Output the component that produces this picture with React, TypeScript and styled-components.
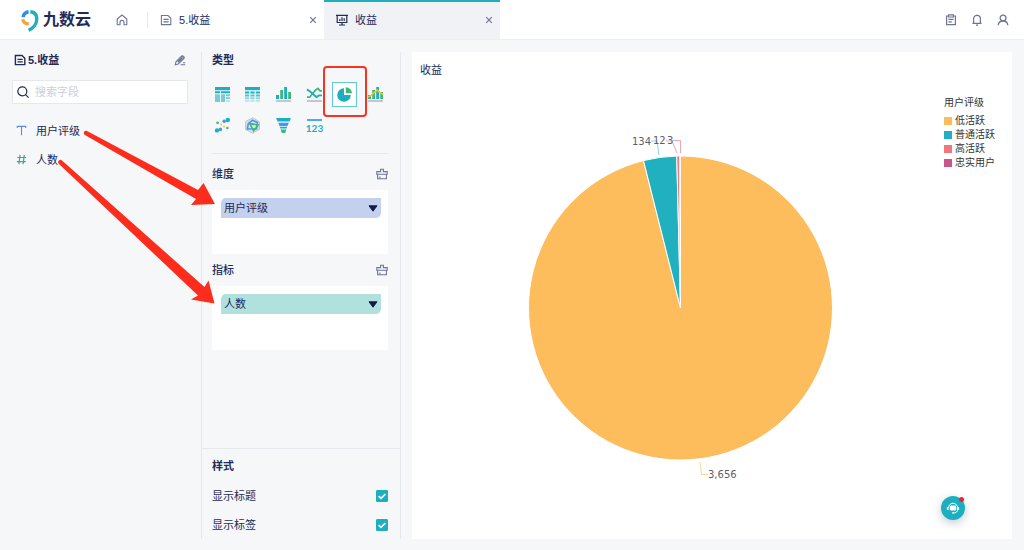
import React from "react";
import styled, { createGlobalStyle } from "styled-components";

const TEAL = "#1dafbf";
const GREEN = "#3cb878";
const BLUE = "#3a9bf5";
const INK = "#232a58";
const MUTED = "#6f7594";
const LINE = "#e6e8ed";

const GlobalStyle = createGlobalStyle`
  *, *::before, *::after { box-sizing: border-box; }
  body {
    margin: 0;
    background: #f6f7f9;
    color: ${INK};
    font: 11px/16px "Liberation Sans", "Noto Sans CJK SC", sans-serif;
  }
  button, input, select { font: inherit; color: inherit; }
  button { border: 0; padding: 0; background: none; cursor: pointer; }
  svg { display: block; }
`;

const Page = styled.div`
  display: flex;
  flex-direction: column;
  min-height: 100vh;
`;

const Header = styled.header`
  display: flex;
  align-items: stretch;
  height: 40px;
  background: #fff;
  border-bottom: 1px solid #eceef1;
`;

const Logo = styled.a`
  display: flex;
  align-items: center;
  gap: 3px;
  margin-left: 20px;
  color: ${INK};
  text-decoration: none;
  font-size: 16px;
  font-weight: 700;
`;

const HomeLink = styled.a`
  display: flex;
  align-items: center;
  margin: 0 19px 0 25px;
  color: ${MUTED};
`;

const Tabs = styled.nav`
  display: flex;
  flex: 1;
  align-items: center;
  &::before {
    content: "";
    width: 1px;
    height: 16px;
    background: ${LINE};
  }
`;

const Tab = styled.div<{ $active?: boolean }>`
  display: flex;
  align-items: center;
  width: 176px;
  height: 100%;
  padding: 0 5px 0 12px;
  border-top: 2px solid ${(p) => (p.$active ? TEAL : "transparent")};
  border-bottom: 2px solid transparent;
  background: ${(p) => (p.$active ? "#f0f2f6" : "transparent")};
`;

const TabLink = styled.a`
  display: flex;
  flex: 1;
  align-items: center;
  gap: 7px;
  color: ${INK};
  text-decoration: none;
`;

const IconButton = styled.button`
  display: flex;
  align-items: center;
  justify-content: center;
  min-width: 12px;
  height: 12px;
  color: ${MUTED};
`;

const HeaderTools = styled.div`
  display: flex;
  align-items: center;
  gap: 14px;
  margin-right: 15px;
`;

const Workspace = styled.main`
  position: relative;
  display: flex;
  flex: 1;
  padding: 12px 12px 11px 0;
`;

const FieldPanel = styled.aside`
  flex: 0 0 202px;
  padding: 0 13px 0 12px;
  border-right: 1px solid ${LINE};
`;

const PanelHeading = styled.div<{ $inset?: boolean }>`
  display: flex;
  align-items: center;
  justify-content: space-between;
  padding: ${(p) => (p.$inset ? "0 2px" : "0")};
`;

const Heading = styled.h2<{ $weight?: number }>`
  display: flex;
  align-items: center;
  gap: 2px;
  margin: 0;
  font-size: 11px;
  font-weight: ${(p) => p.$weight ?? 700};
`;

const SearchBox = styled.label`
  display: flex;
  align-items: center;
  gap: 6px;
  height: 24px;
  margin: 12px 0;
  padding: 0 4px;
  background: #fff;
  border: 1px solid #e6e8ee;
`;

const SearchInput = styled.input`
  flex: 1;
  min-width: 0;
  padding: 0;
  border: 0;
  outline: 0;
  background: none;
  &::placeholder { color: #cdcfda; opacity: 1; }
`;

const FieldList = styled.ul`
  margin: 0;
  padding: 0;
  list-style: none;
`;

const FieldItem = styled.li`
  display: flex;
  align-items: center;
  gap: 9px;
  height: 29px;
  padding-left: 4px;
`;

const ConfigPanel = styled.section`
  display: flex;
  flex: 0 0 199px;
  flex-direction: column;
  border-right: 1px solid ${LINE};
`;

const ConfigBody = styled.div`
  flex: 1;
  padding: 0 12px 0 10px;
`;

const TypeGrid = styled.div`
  display: grid;
  grid-template-columns: repeat(6, 1fr);
  grid-auto-rows: 31px;
  margin: 11px -3px 12px -5px;
`;

const TypeButton = styled.button<{ $selected?: boolean }>`
  position: relative;
  display: flex;
  align-items: center;
  justify-content: center;
  justify-self: center;
  align-self: center;
  width: 25px;
  height: 25px;
  border: 1px solid ${(p) => (p.$selected ? "#62c7d1" : "transparent")};
  background: ${(p) => (p.$selected ? "#fff" : "none")};
`;

const Highlight = styled.span`
  position: absolute;
  z-index: 2;
  inset: -17px -11px -11px -10px;
  border: 2px solid #fa3222;
  border-radius: 4px;
`;

const DropSection = styled.section`
  padding-top: 12px;
  & + & { padding-top: 8px; }
  &:first-of-type { border-top: 1px solid ${LINE}; }
`;

const DropZone = styled.div`
  height: 64px;
  margin-top: 8px;
  padding: 8px 7px 0 9px;
  background: #fff;
`;

const Chip = styled.div<{ $color: string }>`
  display: grid;
  align-items: center;
  height: 20px;
  border-radius: 5px 0 5px 0;
  background: ${(p) => p.$color};
  & > * { grid-area: 1 / 1; }
  & > svg { justify-self: end; margin-right: 3px; pointer-events: none; }
`;

const ChipSelect = styled.select`
  width: 100%;
  height: 20px;
  padding: 0 16px 0 3px;
  border: 0;
  outline: 0;
  appearance: none;
  background: none;
`;

const StylePanel = styled.section`
  padding: 9px 12px 0 10px;
  border-top: 1px solid ${LINE};
`;

const CheckRow = styled.label`
  display: flex;
  align-items: center;
  justify-content: space-between;
  height: 29px;
`;

const CheckList = styled.div`
  padding: 7px 0 0;
`;

const CheckControl = styled.span`
  display: grid;
  place-items: center;
  & > * { grid-area: 1 / 1; }
  & > svg { pointer-events: none; }
`;

const CheckInput = styled.input`
  width: 12px;
  height: 12px;
  margin: 0;
  appearance: none;
  border: 1px solid ${TEAL};
  border-radius: 1px;
  &:checked { background: ${TEAL}; }
`;

const ChartCard = styled.section`
  position: relative;
  display: flex;
  flex: 1;
  flex-direction: column;
  min-width: 0;
  margin-left: 11px;
  padding: 10px 0 0 8px;
  background: #fff;
`;

const ChartBody = styled.div`
  display: flex;
  flex: 1;
  align-items: stretch;
  margin-top: 6px;
`;

const PieSvg = styled.svg`
  flex: 1;
  min-width: 0;
  font: 10px "DejaVu Sans", sans-serif;
  fill: #5b5f6d;
`;

const Legend = styled.div`
  flex: 0 0 71px;
  padding: 12px 0 0 3px;
  color: #333;
  font-size: 10px;
  line-height: 14px;
`;

const LegendTitle = styled.div`
  margin-bottom: 4px;
`;

const LegendItem = styled.div<{ $color: string }>`
  display: flex;
  align-items: center;
  gap: 3px;
  white-space: nowrap;
  &::before {
    content: "";
    width: 8px;
    height: 8px;
    background: ${(p) => p.$color};
  }
`;

const HelpButton = styled.button`
  position: absolute;
  right: 47px;
  bottom: 19px;
  display: grid;
  place-items: center;
  width: 24px;
  height: 24px;
  border-radius: 50%;
  background: ${TEAL};
  box-shadow: 0 3px 10px rgba(60, 80, 110, 0.3);
  &::after {
    content: "";
    position: absolute;
    top: 1px;
    right: 1px;
    width: 5px;
    height: 5px;
    border-radius: 50%;
    background: #f5222d;
  }
`;

const Annotation = styled.svg`
  position: absolute;
  top: 0;
  left: 0;
  z-index: 3;
  pointer-events: none;
`;

const LogoMark = () => (
  <svg width="20" height="24" viewBox="0 0 20 24" fill="none" strokeWidth="3.4">
    <path d="M3 9.3C3.5 6.3 5.7 4.2 8.6 3.8" stroke="#2c8fe8" />
    <path d="M2.8 11.2C3.3 14.2 5.5 15.8 8.8 15.9" stroke="#f8a13f" />
    <path d="M10.3 3.8C14.3 4.2 16.8 6.9 16.8 10.8C16.8 16 13.2 20.3 8.6 22.2" stroke="#1fb0c0" />
  </svg>
);

const HomeIcon = () => (
  <svg width="12" height="12" viewBox="0 0 12 12" fill="none" stroke="currentColor" strokeWidth="1.1" strokeLinejoin="round">
    <path d="M1.2 5L6 1L10.8 5V10.8H8V8.4A2 2 0 0 0 4 8.400V10.8H1.2Z" />
  </svg>
);

const DocIcon = ({ bold }: { bold?: boolean }) => (
  <svg width="12" height="12" viewBox="0 0 12 12" fill="none" stroke={bold ? INK : MUTED} strokeWidth={bold ? 1.4 : 1.1}>
    <path d="M1.4 1.5H8L10.8 4.3V10.6H1.4Z" />
    <path d="M3.5 5.4H8.7M3.5 7.9H8.7" />
  </svg>
);

const BoardIcon = () => (
  <svg width="12" height="12" viewBox="0 0 12 12" fill="none" stroke={INK} strokeWidth="1.2">
    <path d="M0 1.3H12M1.2 1.3V8.5H10.8V1.3M6 8.5V11M3 11H9M3.8 5V7M6 3.2V7M8.2 4.2V7" />
  </svg>
);

const CloseIcon = () => (
  <svg width="8" height="8" viewBox="0 0 8 8" stroke="currentColor" strokeWidth="1.2">
    <path d="M1.2 1.2L6.8 6.8M6.8 1.2L1.2 6.8" />
  </svg>
);

const ClipboardIcon = () => (
  <svg width="12" height="12" viewBox="0 0 12 12" fill="none" stroke="currentColor" strokeWidth="1.2">
    <path d="M3.5 2H1.6V10.6H10.4V2H8.5M3.6 0.9H8.4V3H3.6ZM3.4 5.4H8.6M3.4 7.8H6.8" />
  </svg>
);

const BellIcon = () => (
  <svg width="12" height="12" viewBox="0 0 12 12" fill="none" stroke="currentColor" strokeWidth="1.2">
    <path d="M1.4 9.4H10.6M2.6 9.4V5C2.6 2.8 4 1.4 6 1.4S9.4 2.8 9.4 5V9.4M6 0.4V1.4M5 11.2H7" />
  </svg>
);

const UserIcon = () => (
  <svg width="12" height="12" viewBox="0 0 12 12" fill="none" stroke="currentColor" strokeWidth="1.3">
    <circle cx="6" cy="4" r="2.9" />
    <path d="M1.2 11.2C1.4 8.600 3 7 6 7S10.6 8.600 10.8 11.2" />
  </svg>
);

const PencilIcon = () => (
  <svg width="12" height="12" viewBox="0 0 12 12" fill="none" stroke="currentColor" strokeWidth="1.1">
    <path d="M1.3 10.7L2 7.8L7.6 2L10 4.4L4.2 10Z" />
    <path d="M4 8L8.2 3.8" strokeWidth="2" />
    <path d="M8.3 1.3L10.8 3.6M6.6 10.8H11.2M9 8.7H11.2" />
  </svg>
);

const SearchIcon = () => (
  <svg width="12" height="12" viewBox="0 0 12 12" fill="none" stroke={INK} strokeWidth="1.2">
    <circle cx="5.3" cy="5.3" r="4.5" />
    <path d="M8.6 8.6L11.6 11.6" />
  </svg>
);

const TextTypeIcon = () => (
  <svg width="11" height="11" viewBox="0 0 11 11" fill="none" stroke="#5b8be0" strokeWidth="1.1">
    <path d="M1.3 3V1.4H9.7V3M5.5 1.4V10.2" />
  </svg>
);

const NumberTypeIcon = () => (
  <svg width="11" height="11" viewBox="0 0 11 11" fill="none" stroke="#35ab98" strokeWidth="1.2">
    <path d="M4.1 0.8L2.9 10.2M8.3 0.8L7.1 10.2M1.2 3.5H10.2M0.8 7.6H9.8" />
  </svg>
);

const ClearIcon = () => (
  <svg width="12" height="12" viewBox="0 0 12 12" fill="none" stroke="currentColor" strokeWidth="1.1">
    <path d="M4.6 3.6V1.2H7.4V3.6H11.2V6.2H0.8V3.6ZM1.6 6.2V10.8H10.4V6.2M3.9 8.6V10.8" />
  </svg>
);

const CaretIcon = () => (
  <svg width="10" height="7" viewBox="0 0 10 7" fill="#14194a">
    <path d="M1 0.8H9L5 6.2Z" stroke="#14194a" strokeLinejoin="round" />
  </svg>
);

const CheckIcon = () => (
  <svg width="12" height="12" viewBox="0 0 12 12" fill="none" stroke="#fff" strokeWidth="1.7">
    <path d="M2.6 6.1L5 8.4L9.4 4" />
  </svg>
);

const HeadsetIcon = () => (
  <svg width="14" height="14" viewBox="0 0 14 14" fill="none" stroke="#fff">
    <path d="M2.4 7A4.6 4.8 0 0 1 11.6 7V9.2Q11.2 11.4 8.6 11.9" />
    <rect x="3.8" y="4.4" width="6.4" height="5.2" rx="1.4" fill="#fff" stroke="none" />
    <path d="M1.7 6.2V9M12.3 6.2V9" strokeWidth="1.6" />
    <path d="M6.2 11.9H8.6" strokeWidth="1.4" />
  </svg>
);

const TypeSvg = ({ children }: { children: React.ReactNode }) => (
  <svg width="17" height="17" viewBox="0 0 17 17" fill="none">
    {children}
  </svg>
);

const chartTypes: { name: string; icon: React.ReactNode; selected?: boolean }[] = [
  {
    name: "分组表",
    icon: (
      <>
        <path d="M1 1H16V4.2H1ZM1 5.3H6V7.3H1ZM7 5.3H16V7.3H7Z" fill={TEAL} />
        <path d="M1 8.3H6V16H1Z" fill="#76cdd7" />
        <path d="M7 8.3H11V16H7ZM12 8.3H16V10.2H12ZM12 11.2H16V13H12Z" fill="#76cdd7" />
        <path d="M12 14H16V16H12Z" fill="#c0e8ec" />
      </>
    ),
  },
  {
    name: "明细表",
    icon: (
      <>
        <path d="M1 1H16V4.2H1Z" fill={TEAL} />
        <path d="M1 6.4H5.2M6.4 6.4H10.6M11.8 6.4H16" stroke={TEAL} strokeWidth="2" />
        <path d="M1 9.4H5.2M6.4 9.4H10.6M11.8 9.4H16" stroke="#55c2cd" strokeWidth="2" />
        <path d="M1 12.2H5.2M6.4 12.2H10.6M11.8 12.2H16" stroke="#8ed6de" strokeWidth="2" />
        <path d="M1 15H5.2M6.4 15H10.6M11.8 15H16" stroke="#bfe7eb" strokeWidth="1.8" />
      </>
    ),
  },
  {
    name: "柱状图",
    icon: (
      <>
        <path d="M1 9H4V13H1ZM9.2 1H12V13H9.2Z" fill={TEAL} />
        <path d="M5.2 4H8V13H5.2ZM13.2 6H16V13H13.2Z" fill={GREEN} />
        <path d="M1 15H16" stroke="#bfc0ce" strokeWidth="1.8" />
      </>
    ),
  },
  {
    name: "折线图",
    icon: (
      <>
        <path d="M1 11.2H3.6L9.4 4.2L12 2.4L14 4.8H16" stroke={GREEN} strokeWidth="1.7" />
        <path d="M1 3.4L5 6.2L10.4 11L13 9.4H16" stroke={TEAL} strokeWidth="1.9" />
        <path d="M1 15H16" stroke="#bfc0ce" strokeWidth="1.8" />
      </>
    ),
  },
  {
    name: "饼图",
    selected: true,
    icon: (
      <>
        <path d="M8 2.2A6.8 6.8 0 1 0 14.8 9H8Z" fill={TEAL} />
        <path d="M9.8 1.2A6.3 6.3 0 0 1 16 7.3H9.8Z" fill={GREEN} />
      </>
    ),
  },
  {
    name: "组合图",
    icon: (
      <>
        <path d="M1 9H4V13H1ZM9.2 1H12V13H9.2Z" fill={TEAL} />
        <path d="M5.2 4H8V13H5.2ZM13.2 6H16V13H13.2Z" fill={GREEN} />
        <path d="M1 11L4.2 9.4L10 4L13 6.4L16 8.6" stroke="#f6bf36" strokeWidth="1.7" />
        <path d="M1 15H16" stroke="#bfc0ce" strokeWidth="1.8" />
      </>
    ),
  },
  {
    name: "散点图",
    icon: (
      <>
        <circle cx="13.8" cy="3" r="2.2" fill={TEAL} />
        <circle cx="3" cy="13.4" r="2.2" fill={TEAL} />
        <circle cx="10.2" cy="4.2" r="1.8" fill={BLUE} />
        <circle cx="6.4" cy="12.4" r="1.8" fill={BLUE} />
        <circle cx="3.6" cy="5.8" r="1.4" fill={GREEN} />
        <circle cx="13.4" cy="11" r="1.3" fill={GREEN} />
        <circle cx="7.2" cy="7.6" r="1" fill="#f6bf36" />
        <circle cx="10" cy="9.4" r="1" fill="#f6bf36" />
      </>
    ),
  },
  {
    name: "雷达图",
    icon: (
      <>
        <path d="M8.5 0.8L15.4 4.6V12.4L8.5 16.2L1.6 12.4V4.6Z" fill="#e0e1ea" stroke="#bfc0ce" />
        <path d="M8.3 3.2L13.4 5.6L12.6 11.8L3.4 12L4.2 6.8Z" stroke={BLUE} strokeWidth="1.6" />
        <path d="M5.8 6.6L14.2 8L9.6 13.8Z" stroke={GREEN} strokeWidth="1.6" />
      </>
    ),
  },
  {
    name: "漏斗图",
    icon: (
      <>
        <path d="M1 1H16L14.4 4.6H2.6Z" fill={TEAL} />
        <path d="M3.2 5.8H13.8L12.4 9.2H4.6Z" fill={BLUE} />
        <path d="M4.8 10H12.2L11.6 11.6H5.4Z" fill={TEAL} />
        <path d="M5.6 12.4H11.4L10.2 16H6.8Z" fill={GREEN} />
      </>
    ),
  },
  {
    name: "指标卡",
    icon: (
      <>
        <path d="M1 3H16" stroke={BLUE} strokeWidth="1.8" />
        <text x="8.5" y="15" textAnchor="middle" fill={TEAL} fontFamily="Lato" fontSize="10" fontWeight="700">
          123
        </text>
      </>
    ),
  },
];

const slices = [
  { name: "低活跃", value: 3656, color: "#fdbd5d" },
  { name: "普通活跃", value: 134, color: "#20b0c0" },
  { name: "高活跃", value: 12, color: "#f2777a" },
  { name: "忠实用户", value: 3, color: "#c9568a" },
];

const CX = 260.5;
const CY = 224;
const R = 152;

const slicePath = (from: number, to: number) => {
  const point = (t: number) =>
    `${CX + R * Math.sin(t * 2 * Math.PI)} ${CY - R * Math.cos(t * 2 * Math.PI)}`;
  return `M${CX} ${CY}L${point(from)}A${R} ${R} 0 ${to - from > 0.5 ? 1 : 0} 1 ${point(to)}Z`;
};

const PieChart = () => {
  const total = slices.reduce((sum, s) => sum + s.value, 0);
  let start = 0;
  return (
    <PieSvg viewBox="0 0 521 455" role="img" aria-label="收益">
      {slices.map((s) => {
        const from = start;
        start += s.value / total;
        return <path key={s.name} d={slicePath(from, start)} fill={s.color} stroke="#fff" />;
      })}
      <g fill="none">
        <path d="M239 71L237 57H231" stroke="#8fd5dd" />
        <path d="M257 69L252 57H246" stroke="#f5a6ab" />
        <path d="M260.5 69V56.5H253" stroke="#eda3ba" />
        <path d="M280 378L281.5 390.5H288" stroke="#fdd596" />
      </g>
      <text x="212" y="61">134</text>
      <text x="233" y="60">12</text>
      <text x="247" y="60">3</text>
      <text x="288" y="394">3,656</text>
    </PieSvg>
  );
};

const DropField = ({ title, value, color }: { title: string; value: string; color: string }) => (
  <DropSection>
    <PanelHeading>
      <Heading $weight={500}>{title}</Heading>
      <IconButton aria-label={`清空${title}`}><ClearIcon /></IconButton>
    </PanelHeading>
    <DropZone>
      <Chip $color={color}>
        <ChipSelect aria-label={title} defaultValue={value}>
          <option>{value}</option>
        </ChipSelect>
        <CaretIcon />
      </Chip>
    </DropZone>
  </DropSection>
);

const CheckOption = ({ label }: { label: string }) => (
  <CheckRow>
    {label}
    <CheckControl>
      <CheckInput type="checkbox" defaultChecked />
      <CheckIcon />
    </CheckControl>
  </CheckRow>
);

export default function App() {
  return (
    <Page>
      <GlobalStyle />
      <Header>
        <Logo href="#"><LogoMark />九数云</Logo>
        <HomeLink href="#" aria-label="首页"><HomeIcon /></HomeLink>
        <Tabs>
          <Tab>
            <TabLink href="#"><DocIcon />5.收益</TabLink>
            <IconButton aria-label="关闭"><CloseIcon /></IconButton>
          </Tab>
          <Tab $active>
            <TabLink href="#"><BoardIcon />收益</TabLink>
            <IconButton aria-label="关闭"><CloseIcon /></IconButton>
          </Tab>
        </Tabs>
        <HeaderTools>
          <IconButton aria-label="任务"><ClipboardIcon /></IconButton>
          <IconButton aria-label="通知"><BellIcon /></IconButton>
          <IconButton aria-label="账户"><UserIcon /></IconButton>
        </HeaderTools>
      </Header>
      <Workspace>
        <FieldPanel>
          <PanelHeading $inset>
            <Heading><DocIcon bold />5.收益</Heading>
            <IconButton aria-label="编辑"><PencilIcon /></IconButton>
          </PanelHeading>
          <SearchBox>
            <SearchIcon />
            <SearchInput placeholder="搜索字段" aria-label="搜索字段" />
          </SearchBox>
          <FieldList>
            <FieldItem><TextTypeIcon />用户评级</FieldItem>
            <FieldItem><NumberTypeIcon />人数</FieldItem>
          </FieldList>
        </FieldPanel>
        <ConfigPanel>
          <ConfigBody>
            <Heading>类型</Heading>
            <TypeGrid>
              {chartTypes.map((t) => (
                <TypeButton key={t.name} $selected={t.selected} aria-label={t.name} aria-pressed={!!t.selected}>
                  <TypeSvg>{t.icon}</TypeSvg>
                  {t.selected && <Highlight />}
                </TypeButton>
              ))}
            </TypeGrid>
            <DropField title="维度" value="用户评级" color="#c3d0ee" />
            <DropField title="指标" value="人数" color="#b1e1dc" />
          </ConfigBody>
          <StylePanel>
            <Heading>样式</Heading>
            <CheckList>
              <CheckOption label="显示标题" />
              <CheckOption label="显示标签" />
            </CheckList>
          </StylePanel>
        </ConfigPanel>
        <ChartCard>
          <Heading $weight={400}>收益</Heading>
          <ChartBody>
            <PieChart />
            <Legend>
              <LegendTitle>用户评级</LegendTitle>
              {slices.map((s) => (
                <LegendItem key={s.name} $color={s.color}>{s.name}</LegendItem>
              ))}
            </Legend>
          </ChartBody>
          <HelpButton aria-label="在线客服"><HeadsetIcon /></HelpButton>
        </ChartCard>
        <Annotation width="220" height="280" viewBox="0 40 220 280" fill="#fc2d1c" aria-hidden="true">
          <path d="M87 131L198 190L203.5 183L215 204L191 205L196 199L85 135A2.2 2.2 0 0 1 87 131Z" />
          <path d="M62 160.5L204.5 287L208.5 280.5L214.5 303.5L191 299.5L198 295.5L59 164A2.2 2.2 0 0 1 62 160.5Z" />
        </Annotation>
      </Workspace>
    </Page>
  );
}
